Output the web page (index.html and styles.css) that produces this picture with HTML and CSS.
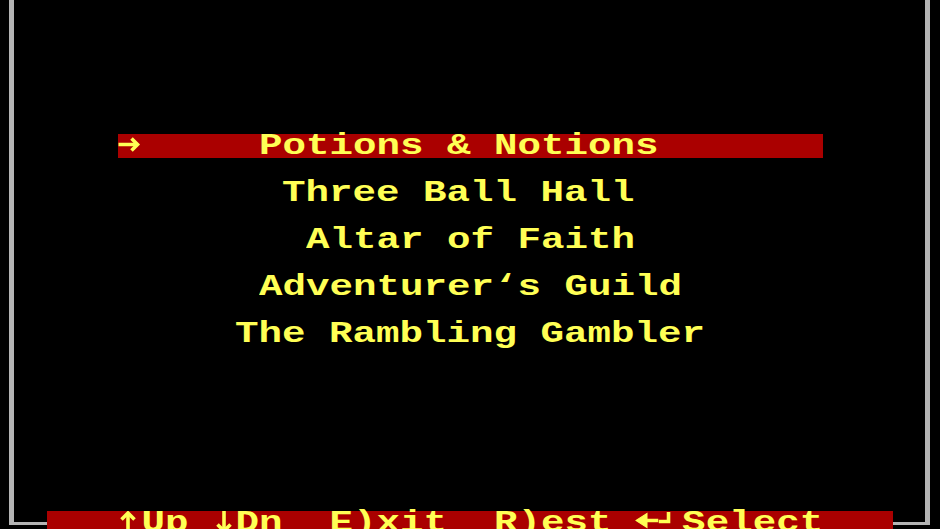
FILE: index.html
```html
<!DOCTYPE html>
<html lang="en">
<head>
<meta charset="utf-8">
<title>Town Menu</title>
<link rel="stylesheet" href="styles.css">
</head>
<body>
<div class="screen">
  <div class="menu">
    <div class="item selected"><span class="txt"><svg class="icon" viewBox="0 0 23.5 24" preserveAspectRatio="none" aria-label="→"><path d="M0.5 10.5H19.5" /><path d="M13.5 4.5L19.5 10.5L13.5 16.5" /></svg>     Potions &amp; Notions</span></div>
    <div class="item c12"><span class="txt">Three Ball Hall</span></div>
    <div class="item c13"><span class="txt">Altar of Faith</span></div>
    <div class="item c11"><span class="txt">Adventurer‘s Guild</span></div>
    <div class="item c10"><span class="txt">The Rambling Gambler</span></div>
  </div>
  <div class="status"><span class="txt"><svg class="icon" viewBox="0 0 23.5 24" preserveAspectRatio="none" aria-label="↑"><path d="M10 2V24" /><path d="M3.5 8.5L10 2L16.5 8.5" /></svg>Up <svg class="icon" viewBox="0 0 23.5 24" preserveAspectRatio="none" aria-label="↓"><path d="M12 0V20" /><path d="M5.5 13.5L12 20L18.5 13.5" /></svg>Dn  E)xit  R)est <svg class="icon" viewBox="0 0 23.5 24" preserveAspectRatio="none" aria-label="◄"><path class="solid" d="M1 9.5L12 2.5V16.5Z" /><path d="M11 9.5H23.5" /></svg><svg class="icon" viewBox="0 0 23.5 24" preserveAspectRatio="none" aria-label="┘"><path d="M10 1V10.5H0" /></svg>Select</span></div>
</div>
</body>
</html>
```
FILE: styles.css
```css
html, body {
  margin: 0;
  padding: 0;
  background: #000;
}

.screen {
  position: relative;
  width: 940px;
  height: 529px;
  overflow: hidden;
  background: #000;
  color: #ffff55;
  font-family: "Liberation Mono", "DejaVu Sans Mono", monospace;
  font-weight: bold;
  font-size: 30px;
  --cell: 23.5px;
}

.screen::before {
  content: "";
  position: absolute;
  left: 9px;
  top: -10px;
  width: 921px;
  height: 535px;
  box-sizing: border-box;
  border-left: 5px solid #b4b4b4;
  border-right: 5px solid #b4b4b4;
  border-bottom: 3px solid #b4b4b4;
}

.menu {
  display: flex;
  flex-direction: column;
  gap: 23px;
  padding-top: 134px;
}

.item {
  height: 24px;
  line-height: 24px;
}

.txt {
  display: inline-block;
  white-space: pre;
  transform: scaleX(1.3056);
  transform-origin: left center;
}

.icon {
  display: inline-block;
  width: 18px;
  height: 24px;
  vertical-align: top;
  fill: none;
  stroke: currentColor;
  stroke-width: 3.6;
  stroke-linecap: butt;
  stroke-linejoin: miter;
}

.icon .solid {
  fill: currentColor;
  stroke-width: 1;
}

.selected {
  margin-left: calc(5 * var(--cell));
  width: calc(30 * var(--cell));
  background: #aa0000;
}

.c10 { margin-left: calc(10 * var(--cell)); }
.c11 { margin-left: calc(11 * var(--cell)); }
.c12 { margin-left: calc(12 * var(--cell)); }
.c13 { margin-left: calc(13 * var(--cell)); }

.status {
  position: relative;
  z-index: 1;
  margin-top: 165px;
  margin-left: calc(2 * var(--cell));
  width: calc(36 * var(--cell));
  height: 24px;
  line-height: 24px;
  padding-left: calc(3 * var(--cell));
  box-sizing: border-box;
  background: #aa0000;
}
```
